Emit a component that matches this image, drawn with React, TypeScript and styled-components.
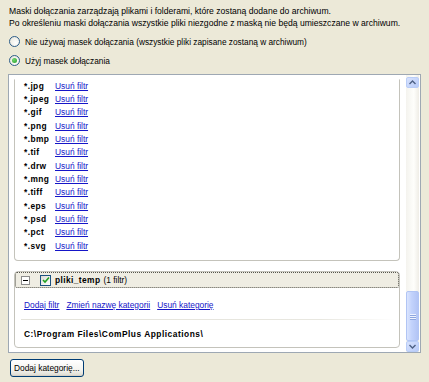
import React from 'react'
import styled, { createGlobalStyle } from 'styled-components'

const GlobalStyle = createGlobalStyle`
  html, body {
    margin: 0;
    padding: 0;
    background: #ece9d8;
  }
  body {
    font-family: "Liberation Sans", Arial, sans-serif;
    font-size: 8.4px;
    color: #000;
  }
`

const Page = styled.div`
  width: 429px;
  height: 382px;
  padding: 5px 8px 0 8px;
  box-sizing: border-box;
  display: flex;
  flex-direction: column;
`

const Intro = styled.div`
  padding-left: 1px;
  font-size: 8.6px;
  line-height: 12px;
`

const RadioList = styled.div`
  display: flex;
  flex-direction: column;
  gap: 8px;
  margin-top: 7px;
`

const RadioRow = styled.label`
  display: flex;
  align-items: center;
  gap: 5px;
  height: 11px;
  padding-left: 1px;
  font-size: 8.3px;
`

const RadioCircle = styled.span<{ $checked?: boolean }>`
  width: 11px;
  height: 11px;
  box-sizing: border-box;
  border-radius: 50%;
  border: 1px solid #2d5d8a;
  background: radial-gradient(circle at 65% 65%, #ffffff 0%, #f0efe8 60%, #d8d6cb 100%);
  display: flex;
  align-items: center;
  justify-content: center;

  &::after {
    content: '';
    display: ${(p) => (p.$checked ? 'block' : 'none')};
    width: 5px;
    height: 5px;
    border-radius: 50%;
    background: radial-gradient(circle at 35% 35%, #6ed66e, #2a9f2a);
  }
`

const ListBox = styled.div`
  margin-top: 8px;
  width: 413px;
  height: 279px;
  box-sizing: border-box;
  border: 1px solid #9ea8b3;
  background: #fff;
  display: flex;
`

const Content = styled.div`
  flex: 1;
  overflow: hidden;
  padding: 0 6px 4px 5px;
  display: flex;
  flex-direction: column;
  justify-content: flex-end;
  gap: 10px;
`

const Card = styled.div<{ $cut?: boolean }>`
  border: 1px solid #c4c3bb;
  border-top-color: ${(p) => (p.$cut ? 'transparent' : '#c4c3bb')};
  border-radius: ${(p) => (p.$cut ? '0 0 4px 4px' : '4px')};
  background: #fff;
`

const FilterList = styled.div`
  padding: 0 0 7px 9px;
`

const FilterRow = styled.div`
  display: flex;
  height: 13.33px;
  line-height: 13.33px;
`

const Ext = styled.span`
  width: 31px;
  flex-shrink: 0;
  font-weight: bold;
  letter-spacing: 0.4px;
`

const Link = styled.a`
  color: #1515c8;
  text-decoration: underline;
  cursor: pointer;
`

const CardHeader = styled.div`
  height: 16px;
  box-sizing: border-box;
  border: 1px dotted #55544c;
  background: #efede3;
  border-radius: 2px;
  display: flex;
  align-items: center;
  padding-left: 5px;
`

const ToggleBox = styled.span`
  width: 9px;
  height: 9px;
  box-sizing: border-box;
  border: 1px solid #8c8c8c;
  background: #fff;
  position: relative;
  margin-right: 10px;

  &::after {
    content: '';
    position: absolute;
    left: 1px;
    right: 1px;
    top: 3px;
    height: 1px;
    background: #000;
  }
`

const CheckBox = styled.span`
  width: 11px;
  height: 11px;
  box-sizing: border-box;
  border: 1px solid #1c5180;
  background: linear-gradient(135deg, #dcdbd5, #fff);
  display: flex;
  align-items: center;
  justify-content: center;
  margin-right: 4px;
`

const HeaderName = styled.span`
  font-weight: bold;
  letter-spacing: 0.4px;
  margin-right: 3px;
`

const CardBody = styled.div`
  padding: 0 4px 0 9px;
`

const LinkRow = styled.div`
  display: flex;
  gap: 7px;
  height: 14px;
  align-items: center;
  margin-top: 10px;
`

const Separator = styled.div`
  height: 1px;
  margin: 7px 0 0 -3px;
  background: linear-gradient(90deg, #e3e2da, #e8e7e0 80%, #fff);
`

const PathText = styled.div`
  font-weight: bold;
  letter-spacing: 0.5px;
  line-height: 13px;
  margin-top: 8px;
  margin-bottom: 6px;
`

const ScrollBar = styled.div`
  width: 13px;
  margin-right: 1px;
  display: flex;
  flex-direction: column;
  background: linear-gradient(90deg, #f4f3ee, #fefefb 60%, #efede6);
`

const ScrollButton = styled.div<{ $bottom?: boolean }>`
  height: 11px;
  box-sizing: border-box;
  border: 1px solid #b9cdf7;
  border-radius: 2px;
  background: linear-gradient(135deg, #d7e2fd, #b8cbf8);
  display: flex;
  align-items: center;
  justify-content: center;
  margin: ${(p) => (p.$bottom ? '0' : '2px 0 0 0')};
`

const Track = styled.div`
  flex: 1;
  display: flex;
  flex-direction: column;
  justify-content: flex-end;
`

const Thumb = styled.div`
  height: 50px;
  box-sizing: border-box;
  border: 1px solid #b1c5f4;
  border-radius: 2px;
  background: linear-gradient(90deg, #dbe5fe, #c3d3fc 40%, #b2c4f5);
  display: flex;
  flex-direction: column;
  align-items: center;
  justify-content: center;
  gap: 1px;
`

const Grip = styled.span`
  width: 6px;
  height: 1px;
  background: #eef3ff;
  box-shadow: 0 1px 0 #8da6df;
`

const Footer = styled.div`
  margin-top: 6px;
  padding-left: 2px;
`

const Button = styled.button`
  font-family: "Liberation Sans", Arial, sans-serif;
  font-size: 8.4px;
  color: #000;
  height: 18px;
  padding: 0 3px;
  border: 1px solid #003c74;
  border-radius: 3px;
  background: linear-gradient(180deg, #ffffff 0%, #f4f4f0 60%, #dcdad0 100%);
  box-shadow: inset 0 -1px 0 #d6d0c5;
`

const filters = ['jpg', 'jpeg', 'gif', 'png', 'bmp', 'tif', 'drw', 'mng', 'tiff', 'eps', 'psd', 'pct', 'svg']

const Arrow = ({ up }: { up?: boolean }) => (
  <svg width="7" height="5" viewBox="0 0 7 5">
    <path d={up ? 'M0.5 4 L3.5 1 L6.5 4' : 'M0.5 1 L3.5 4 L6.5 1'} fill="none" stroke="#4d6185" strokeWidth="1.4" />
  </svg>
)

export default function App() {
  return (
    <Page>
      <GlobalStyle />
      <Intro>
        <div>Maski dołączania zarządzają plikami i folderami, które zostaną dodane do archiwum.</div>
        <div>Po określeniu maski dołączania wszystkie pliki niezgodne z maską nie będą umieszczane w archiwum.</div>
      </Intro>
      <RadioList>
        <RadioRow>
          <RadioCircle />
          Nie używaj masek dołączania (wszystkie pliki zapisane zostaną w archiwum)
        </RadioRow>
        <RadioRow>
          <RadioCircle $checked />
          Użyj masek dołączania
        </RadioRow>
      </RadioList>
      <ListBox>
        <Content>
          <Card $cut>
            <FilterList>
              {filters.map((f) => (
                <FilterRow key={f}>
                  <Ext>*.{f}</Ext>
                  <Link>Usuń filtr</Link>
                </FilterRow>
              ))}
            </FilterList>
          </Card>
          <Card>
            <CardHeader>
              <ToggleBox />
              <CheckBox>
                <svg width="8" height="8" viewBox="0 0 8 8">
                  <path d="M1 4 L3 6 L7 1.5" fill="none" stroke="#21a121" strokeWidth="1.6" />
                </svg>
              </CheckBox>
              <HeaderName>pliki_temp</HeaderName>
              <span>(1 filtr)</span>
            </CardHeader>
            <CardBody>
              <LinkRow>
                <Link>Dodaj filtr</Link>
                <Link>Zmień nazwę kategorii</Link>
                <Link>Usuń kategorię</Link>
              </LinkRow>
              <Separator />
              <PathText>C:\Program Files\ComPlus Applications\</PathText>
            </CardBody>
          </Card>
        </Content>
        <ScrollBar>
          <ScrollButton>
            <Arrow up />
          </ScrollButton>
          <Track>
            <Thumb>
              <Grip />
              <Grip />
              <Grip />
            </Thumb>
          </Track>
          <ScrollButton $bottom>
            <Arrow />
          </ScrollButton>
        </ScrollBar>
      </ListBox>
      <Footer>
        <Button>Dodaj kategorię...</Button>
      </Footer>
    </Page>
  )
}
